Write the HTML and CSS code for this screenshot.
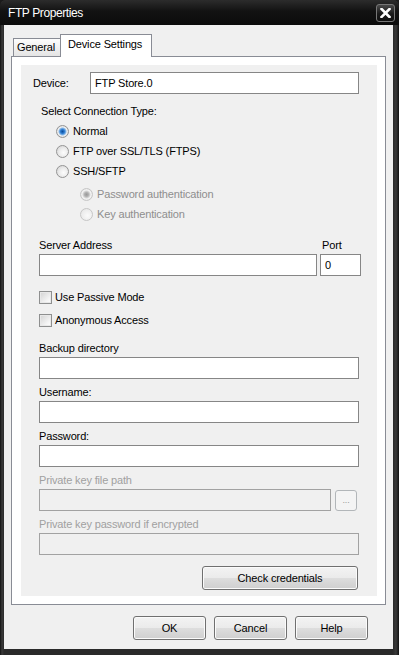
FILE: index.html
```html
<!DOCTYPE html>
<html lang="en">
  <head>
    <meta charset="UTF-8" />
    <title>FTP Properties</title>
    <link rel="stylesheet" href="styles.css">
  </head>
  <body>
    <div class="window">
      <div class="titlebar">
        <span class="title">FTP Properties</span>
        <span class="close">
          <svg width="11" height="10" viewBox="0 0 11 10">
            <path d="M1.5 1 L9.5 9 M9.5 1 L1.5 9" stroke="#fff" stroke-width="2.6" stroke-linecap="square" />
          </svg>
        </span>
      </div>

      <div class="client">
        <!-- Tabs -->
        <div class="tabs">
          <div class="tab">General</div>
          <div class="tab tab-active">Device Settings</div>
        </div>

        <div class="panel">
          <div class="content">
            <div class="device-row">
              <label>Device:</label>
              <input class="text" type="text" value="FTP Store.0" />
            </div>

            <div class="group-title">Select Connection Type:</div>
            <div class="options">
              <label class="option"><input type="radio" name="conn" checked />Normal</label>
              <label class="option"><input type="radio" name="conn" />FTP over SSL/TLS (FTPS)</label>
              <label class="option"><input type="radio" name="conn" />SSH/SFTP</label>
              <label class="option sub first disabled"><input type="radio" name="auth" checked disabled />Password authentication</label>
              <label class="option sub disabled"><input type="radio" name="auth" disabled />Key authentication</label>
            </div>

            <div class="addr-row">
              <div class="field addr-main">
                <label>Server Address</label>
                <input class="text" type="text" />
              </div>
              <div class="field addr-port">
                <label>Port</label>
                <input class="text" type="text" value="0" />
              </div>
            </div>

            <div class="checks">
              <label class="check"><input type="checkbox" />Use Passive Mode</label>
              <label class="check"><input type="checkbox" />Anonymous Access</label>
            </div>

            <div class="field first">
              <label>Backup directory</label>
              <input class="text" type="text" />
            </div>
            <div class="field">
              <label>Username:</label>
              <input class="text" type="text" />
            </div>
            <div class="field">
              <label>Password:</label>
              <input class="text" type="password" />
            </div>
            <div class="field disabled">
              <label>Private key file path</label>
              <div class="path-row">
                <input class="text" type="text" disabled />
                <button class="btn browse" disabled>...</button>
              </div>
            </div>
            <div class="field disabled">
              <label>Private key password if encrypted</label>
              <input class="text" type="password" disabled />
            </div>

            <div class="check-row">
              <button class="btn check-btn">Check credentials</button>
            </div>
          </div>
        </div>

        <!-- Dialog buttons -->
        <div class="actions">
          <button class="btn">OK</button>
          <button class="btn">Cancel</button>
          <button class="btn">Help</button>
        </div>
      </div>
    </div>
  </body>
</html>
```

FILE: styles.css
```css
* {
  margin: 0;
  padding: 0;
  box-sizing: border-box;
  font-family: "Liberation Sans", Arial, sans-serif;
  letter-spacing: -0.15px;
}

body {
  background-color: #1b1b1b;
  font-size: 11px;
  color: #000;
}

.window {
  width: 399px;
  height: 655px;
  display: flex;
  flex-direction: column;
  background: linear-gradient(to right, #111 0, #3a3a3a 2px, #2a2a2a 4px, #2a2a2a 393px, #3a3a3a 396px, #111 399px);
  border-radius: 6px 6px 0 0;
}

.titlebar {
  height: 25px;
  display: flex;
  align-items: center;
  justify-content: space-between;
  padding: 0 4px 0 8px;
  background: linear-gradient(to bottom, #2c2c2c, #121212 45%, #0b0b0b);
  border-radius: 6px 6px 0 0;
  color: #fff;
  font-size: 12px;
}

.title {
  letter-spacing: -0.4px;
}

.close {
  width: 19px;
  height: 18px;
  margin-top: 1px;
  display: flex;
  align-items: center;
  justify-content: center;
  border: 1px solid #777;
  border-radius: 3px;
  background: linear-gradient(to bottom, #4a4a4a, #1a1a1a 55%, #101010);
}

.client {
  flex: 1;
  margin: 0 6px 6px 4px;
  padding: 9px 7px 0;
  background-color: #f0f0f0;
  display: flex;
  flex-direction: column;
}

.tabs {
  height: 22px;
  display: flex;
  align-items: flex-end;
  padding-left: 2px;
}

.tab {
  width: 48px;
  height: 18px;
  padding: 2px 0 0 3px;
  line-height: 13px;
  border: 1px solid #898c95;
  border-bottom: none;
  background: linear-gradient(to bottom, #fdfdfd, #e4e4e4);
}

.tab-active {
  width: 92px;
  height: 23px;
  margin-left: -1px;
  margin-bottom: -1px;
  padding: 3px 0 0 7px;
  position: relative;
  z-index: 1;
  background: #fff;
}

.panel {
  border: 1px solid #898c95;
  background-color: #fff;
  padding: 8px 8px 8px 9px;
}

.content {
  height: 531px;
  padding: 7px 18px 0;
  background-color: #f0f0f0;
  display: flex;
  flex-direction: column;
}

input.text {
  display: block;
  width: 100%;
  height: 22px;
  padding: 0 4px;
  border: 1px solid #868686;
  background-color: #fff;
  font-family: "Liberation Sans", Arial, sans-serif;
  font-size: 11px;
  color: #000;
  outline: none;
}

input.text:disabled {
  background-color: #f0f0f0;
  border-color: #a2a2a2;
}

.device-row {
  display: flex;
  align-items: center;
  margin-left: -6px;
}

.device-row label {
  width: 57px;
  flex-shrink: 0;
}

.group-title {
  margin: 10px 0 0 2px;
  line-height: 14px;
}

.options {
  margin-top: 3px;
}

.option,
.check {
  display: flex;
  align-items: center;
  gap: 4px;
  height: 20px;
  padding-left: 17px;
}

.option.sub {
  padding-left: 41px;
}

.option.first {
  margin-top: 3px;
}

.disabled,
.disabled label {
  color: #a0a0a0;
}

.option.disabled {
  color: #8e8e8e;
}

input[type="radio"] {
  appearance: none;
  width: 13px;
  height: 13px;
  border: 1px solid #949494;
  border-radius: 50%;
  background: radial-gradient(circle at 60% 60%, #fdfdfd 0, #ececec 45%, #cfcfcf 100%);
}

input[type="radio"]:checked {
  background: radial-gradient(circle, #0d4c9a 0, #2c7bd0 2px, #8dbbe8 3.5px, #f2f2f2 4.5px, #d6d6d6 6px);
}

input[type="radio"]:disabled {
  border-color: #c6c6c6;
  background: radial-gradient(circle at 60% 60%, #fafafa, #e3e3e3);
}

input[type="radio"]:disabled:checked {
  background: radial-gradient(circle, #9a9a9a 0, #b0b0b0 2px, #d8d8d8 3.5px, #f4f4f4 4.5px, #e0e0e0 6px);
}

.field label {
  display: block;
  line-height: 14px;
  margin-bottom: 2px;
}

.field {
  margin-top: 6px;
}

.addr-row {
  display: flex;
  gap: 3px;
  margin: 14px -2px 0 0;
}

.addr-row .field {
  margin-top: 0;
}

.addr-main {
  flex: 1;
}

.addr-port {
  width: 41px;
}

.addr-port label {
  padding-left: 2px;
}

.checks {
  margin-top: 10px;
}

.check {
  height: 22px;
  padding-left: 0;
  gap: 3px;
  margin-bottom: 1px;
}

input[type="checkbox"] {
  appearance: none;
  width: 13px;
  height: 13px;
  border: 1px solid #8e8f8f;
  background: linear-gradient(135deg, #d2d2d2, #f4f4f4 70%, #fff);
  box-shadow: inset 0 0 0 1px #e8e8e8;
}

.field.first {
  margin-top: 9px;
}

.path-row {
  display: flex;
  align-items: center;
  gap: 4px;
  margin-right: 2px;
}

.path-row input.text {
  flex: 1;
}

.btn {
  width: 73px;
  height: 24px;
  border: 1px solid #707070;
  border-radius: 3px;
  background: linear-gradient(to bottom, #f3f3f3, #ebebeb 48%, #dddddd 52%, #cfcfcf);
  box-shadow: inset 0 0 0 1px #fbfbfb;
  font-family: "Liberation Sans", Arial, sans-serif;
  font-size: 11px;
  color: #000;
}

.btn.browse {
  width: 22px;
  height: 21px;
  flex-shrink: 0;
  border-color: #b2b6b9;
  background: #f4f4f4;
  box-shadow: none;
  color: #9a9a9a;
  font-size: 9px;
}

.check-row {
  display: flex;
  justify-content: flex-end;
  margin: 11px 1px 0 0;
}

.check-btn {
  width: 156px;
}

.actions {
  display: flex;
  justify-content: flex-end;
  gap: 8px;
  margin-top: 11px;
  padding-right: 18px;
}
```
